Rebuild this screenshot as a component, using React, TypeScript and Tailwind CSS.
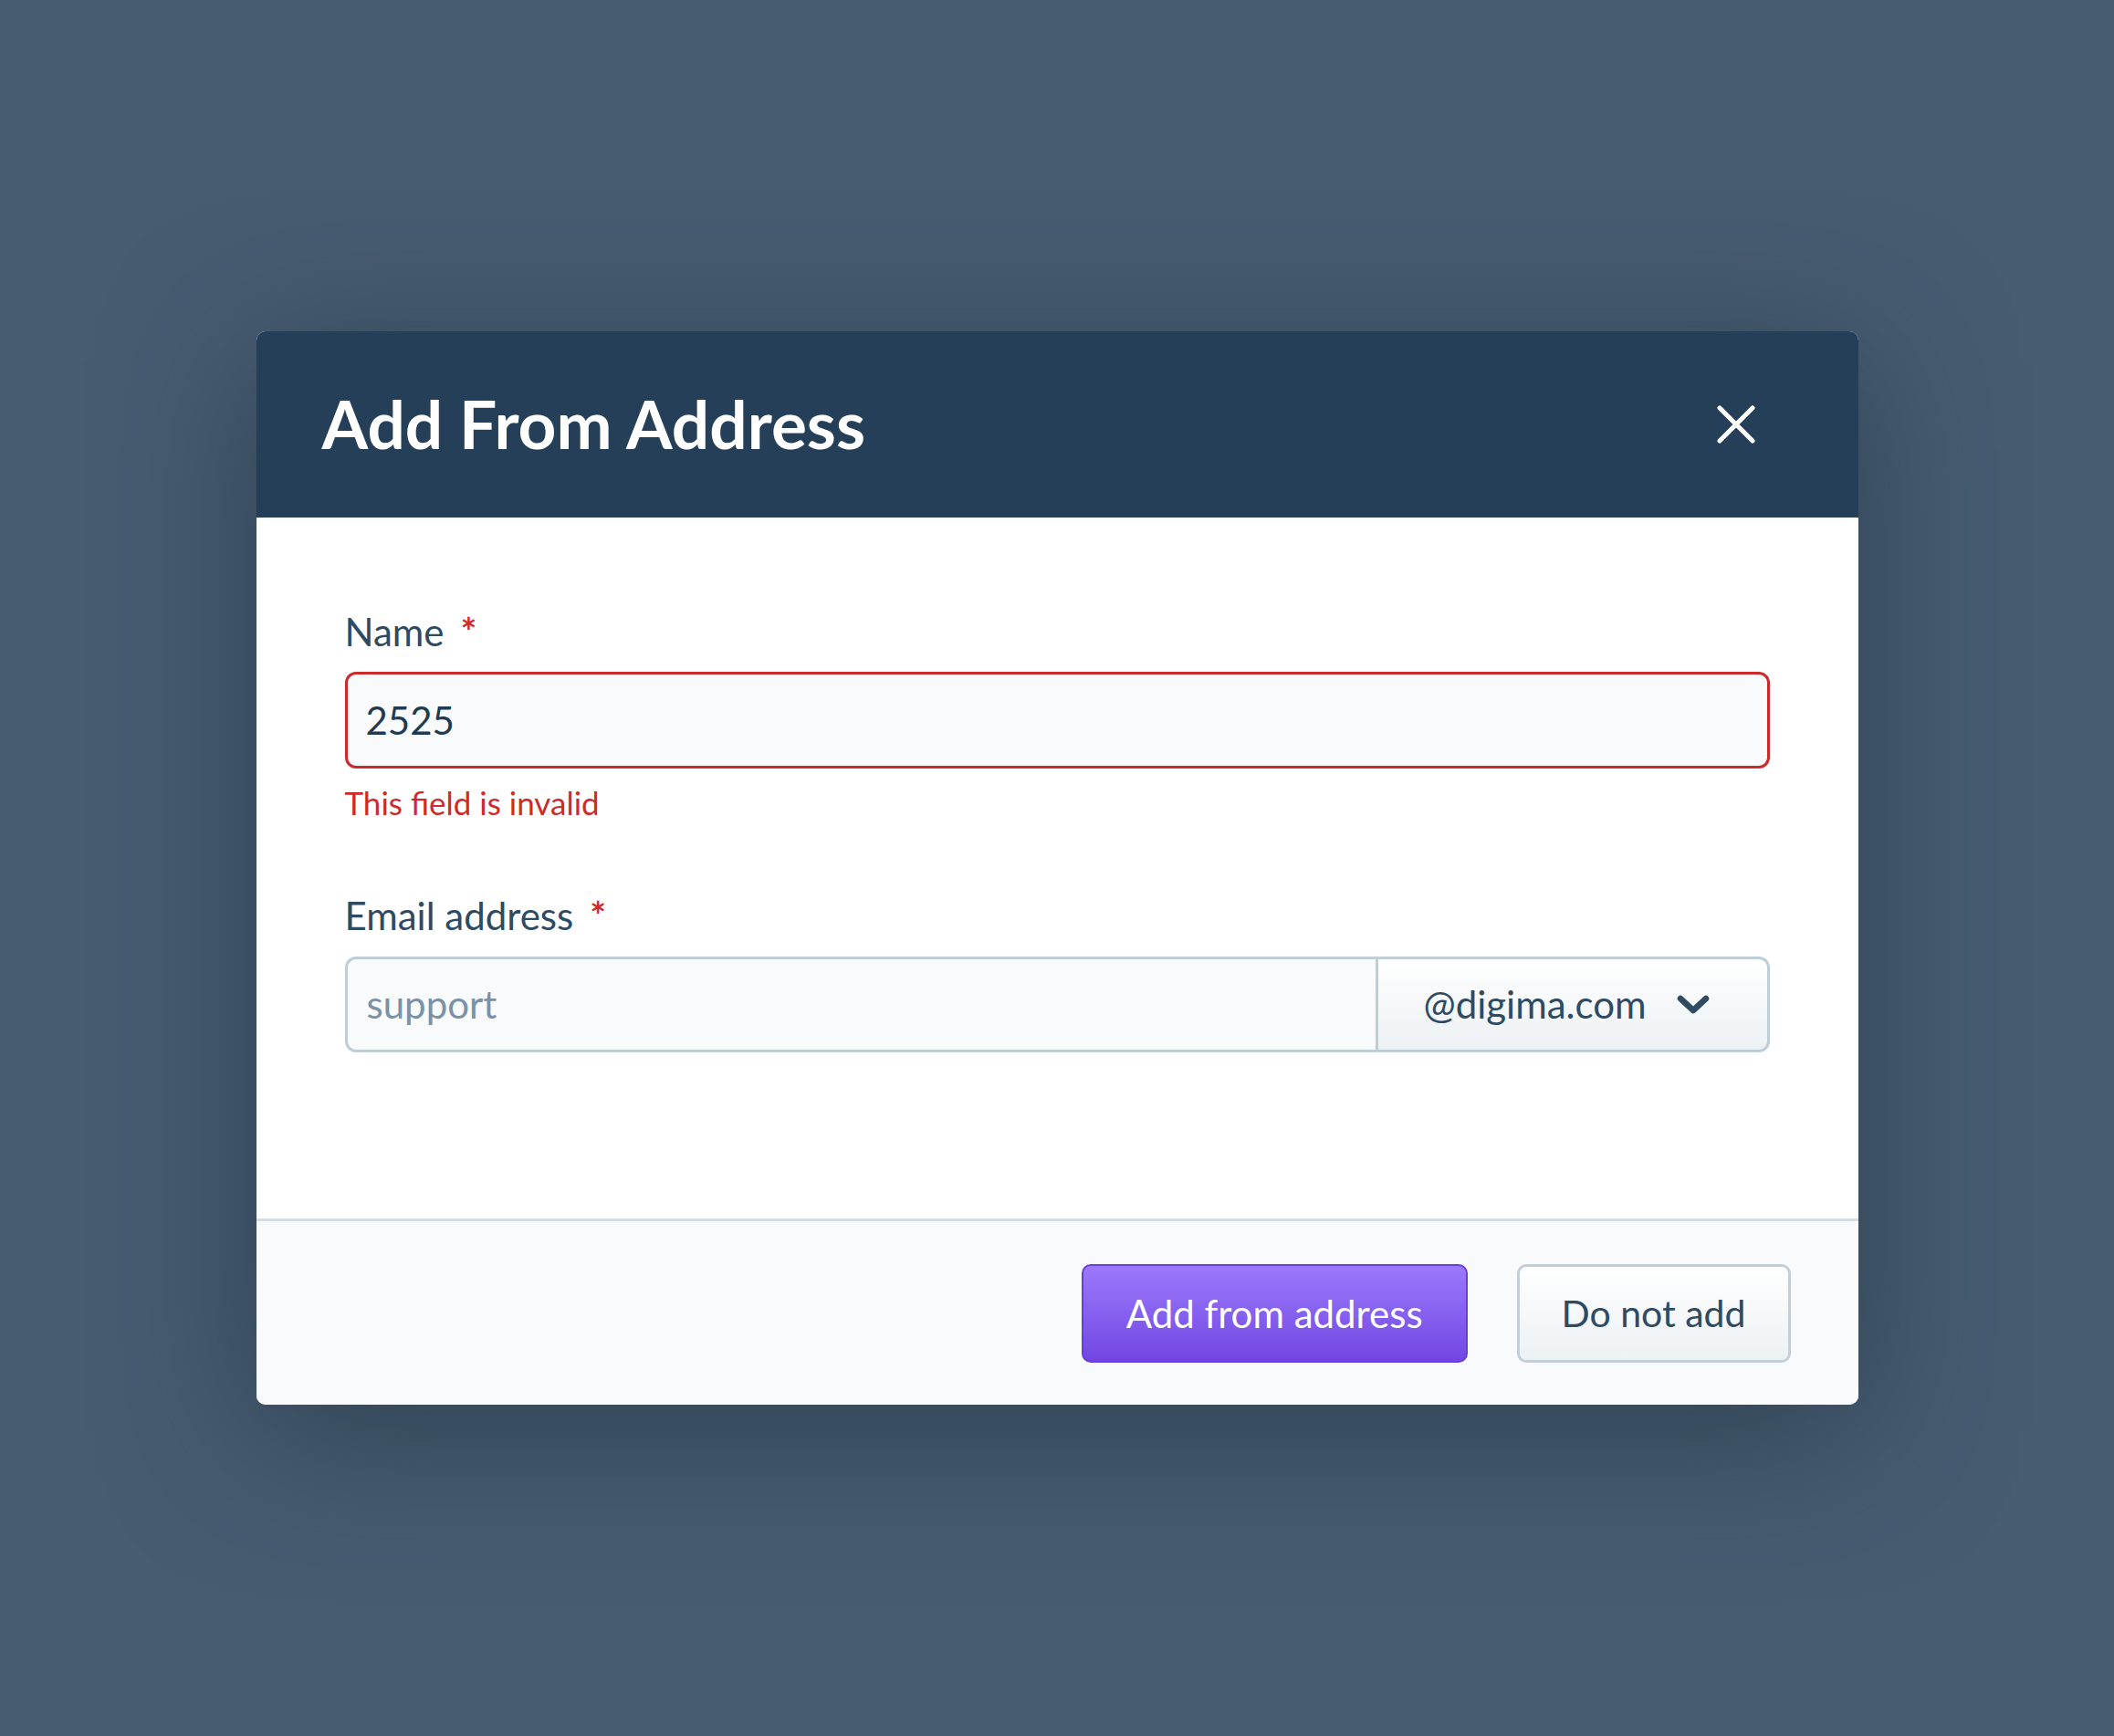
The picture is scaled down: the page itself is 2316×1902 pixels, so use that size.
import React from 'react';

function CloseIcon() {
  return (
    <svg width="42" height="42" viewBox="0 0 42 42" fill="none">
      <path d="M3 3L39 39M39 3L3 39" stroke="white" strokeWidth="5" strokeLinecap="round" />
    </svg>
  );
}

function Chevron() {
  return (
    <svg width="36" height="22" viewBox="0 0 36 22" fill="none">
      <path d="M4 4L18 17L32 4" stroke="#2f4b63" strokeWidth="6.5" strokeLinecap="round" strokeLinejoin="round" />
    </svg>
  );
}

function Label({ text }: { text: string }) {
  return (
    <div className="flex items-baseline text-[42px] leading-[52px] text-[#2f4b63]">
      <span>{text}</span>
      <span className="ml-[18px] text-[#d02b2b] font-bold">*</span>
    </div>
  );
}

export default function App() {
  return (
    <div className="min-h-screen bg-[#475c71] flex items-center justify-center font-['Lato',sans-serif]">
      <div className="w-[1755px] rounded-[10px] overflow-hidden bg-white shadow-[0_30px_160px_rgba(28,44,60,0.55)]">
        {/* header */}
        <div className="h-[204px] bg-[#243f57] flex items-center justify-between pl-[72px] pr-[113px]">
          <h1 className="text-white font-bold text-[73px] leading-[1.2]">Add From Address</h1>
          <button className="flex items-center justify-center">
            <CloseIcon />
          </button>
        </div>

        {/* body */}
        <div className="px-[97px] pt-[99px] pb-[182px]">
          <Label text="Name" />
          <input
            defaultValue="2525"
            className="mt-[18px] w-full h-[106px] rounded-[12px] border-[3px] border-[#cc2b2b] bg-[#f8fafc] px-[20px] text-[42px] text-[#1f3a52] outline-none"
          />
          <div className="mt-[16px] text-[35px] leading-[42px] text-[#cc2b2b]">This field is invalid</div>

          <div className="mt-[77px]">
            <Label text="Email address" />
          </div>
          <div className="mt-[19px] flex h-[105px]">
            <input
              placeholder="support"
              className="flex-1 min-w-0 rounded-l-[12px] border-[3px] border-r-0 border-[#bfcdd7] bg-[#f8fafc] px-[21px] text-[42px] text-[#1f3a52] placeholder:text-[#7b91a6] outline-none"
            />
            <button className="w-[432px] flex items-center rounded-r-[12px] border-[3px] border-[#bfcdd7] bg-linear-to-b from-white to-[#ecf1f4] pl-[50px] text-[42px] text-[#2f4b63]">
              <span>@digima.com</span>
              <span className="ml-[33px] flex items-center">
                <Chevron />
              </span>
            </button>
          </div>
        </div>

        {/* footer */}
        <div className="h-[204px] border-t-[3px] border-[#d3dde5] bg-[#f8fafc] flex items-center justify-end gap-[54px] pr-[74px]">
          <button className="h-[108px] px-[47px] rounded-[10px] border-2 border-[#6a3ed8] bg-linear-to-b from-[#9b79fc] to-[#7245e3] text-white text-[42px] leading-none">
            Add from address
          </button>
          <button className="h-[108px] px-[46px] rounded-[10px] border-[3px] border-[#c3cfd8] bg-linear-to-b from-white to-[#ecf1f4] text-[#2f4b63] text-[41px] leading-none">
            Do not add
          </button>
        </div>
      </div>
    </div>
  );
}
